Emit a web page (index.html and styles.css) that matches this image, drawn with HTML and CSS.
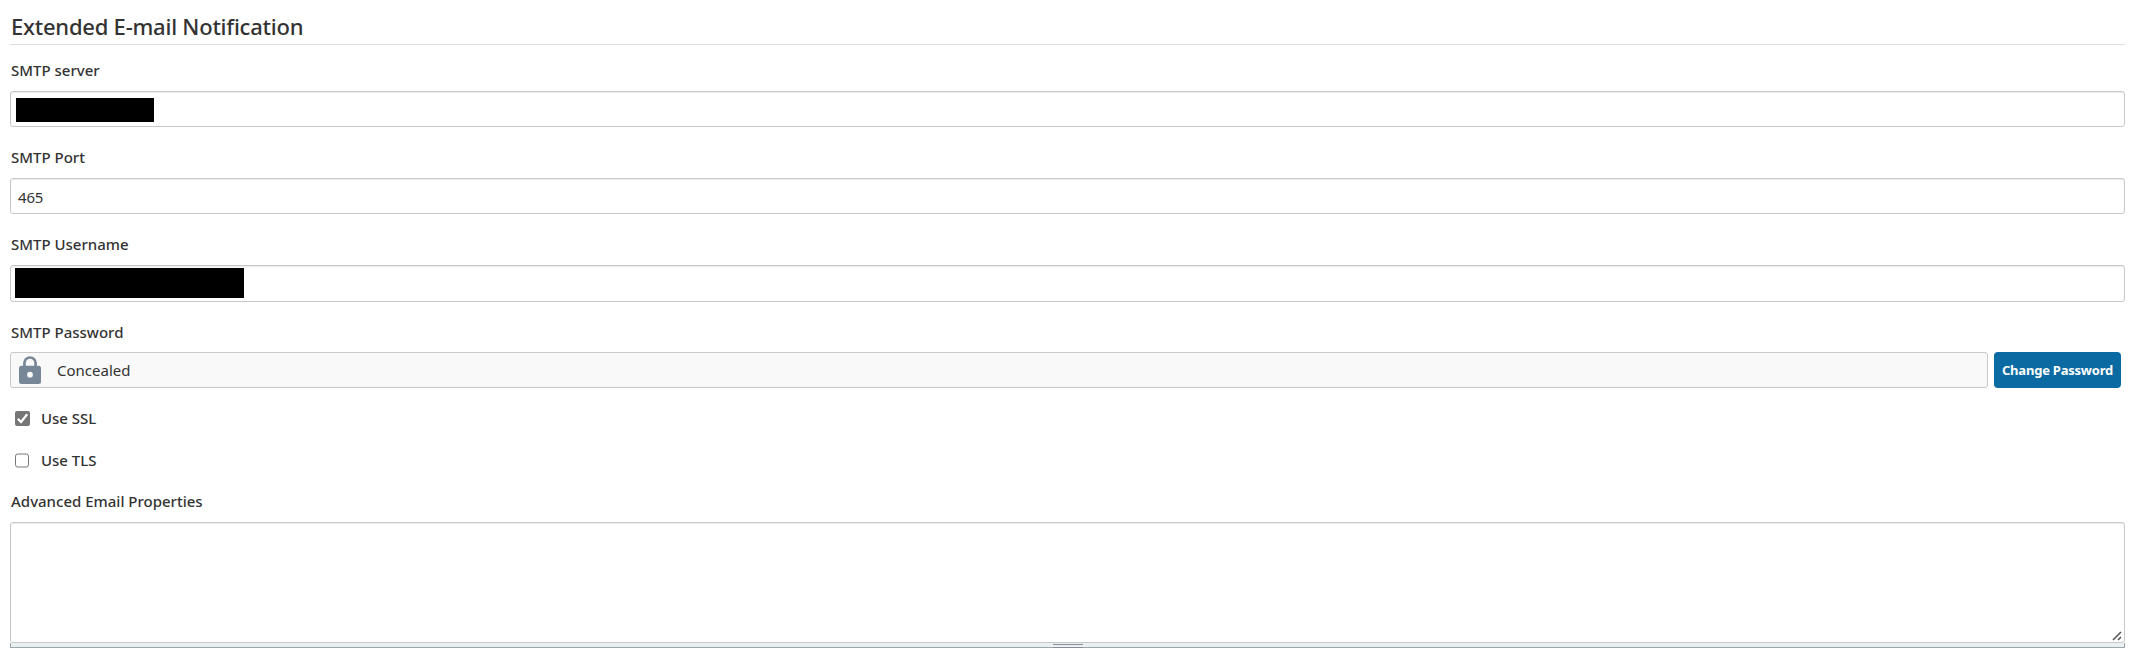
FILE: index.html
```
<!DOCTYPE html>
<html lang="en">
<head>
<meta charset="utf-8">
<title>Extended E-mail Notification</title>
<link rel="stylesheet" href="styles.css">
</head>
<body>
<form class="section">
  <h1 class="section-title"><span>Extended E-mail Notification</span></h1>
  <div class="field">
    <div class="label server">SMTP server</div>
    <div class="input"><span class="redacted host"></span></div>
  </div>
  <div class="field">
    <div class="label port">SMTP Port</div>
    <div class="input"><span class="value">465</span></div>
  </div>
  <div class="field">
    <div class="label username">SMTP Username</div>
    <div class="input tall"><span class="redacted user"></span></div>
  </div>
  <div class="field">
    <div class="label password">SMTP Password</div>
    <div class="password-row">
      <div class="input concealed">
        <svg class="lock" viewBox="0 0 22 28" width="22" height="28"><path d="M5.4 11V7.1a5.6 5.6 0 0 1 11.2 0V11" fill="none" stroke="#788797" stroke-width="2.7"/><rect y="9.7" width="22" height="18.3" rx="2.5" fill="#788797"/><circle cx="11" cy="18.7" r="2.9" fill="#f9f9f9"/></svg>
        <span class="concealed-text">Concealed</span>
      </div>
      <button class="change" type="button"><span>Change Password</span></button>
    </div>
  </div>
  <div class="check ssl">
    <svg width="15" height="15" viewBox="0 0 15 15"><rect width="15" height="15" rx="2" fill="#767676"/><path d="M2.8 7.8L6 11l6.2-7.7" fill="none" stroke="#fff" stroke-width="2.2"/></svg>
    <span class="check-label">Use SSL</span>
  </div>
  <div class="check tls">
    <svg width="15" height="15" viewBox="0 0 15 15"><rect x=".5" y="1" width="13" height="13" rx="2.2" fill="#fff" stroke="#767676"/></svg>
    <span class="check-label">Use TLS</span>
  </div>
  <div class="label advanced">Advanced Email Properties</div>
  <div class="textarea">
    <svg width="10" height="10" viewBox="0 0 10 10"><path d="M1 9L9 1M6 9l3-3" fill="none" stroke="#555" stroke-width="1.6"/></svg>
  </div>
  <div class="resize-bar"><i class="grip"></i></div>
</form>
</body>
</html>
```
FILE: styles.css
```
* { box-sizing: border-box; }
body {
  margin: 0;
  background: #fff;
  color: #333;
  font-family: "Noto Sans", "Open Sans", sans-serif;
  font-size: 15px;
  line-height: 20px;
}
.section { display: flex; flex-direction: column; padding: 0 13px 0 10px; }
.section-title {
  height: 45px;
  margin: 0 0 15px;
  padding: 11px 0 0 1px;
  border-bottom: 1px solid #ddd;
  font-size: 22px;
  line-height: 30px;
  font-weight: 500;
  letter-spacing: -.23px;
}
.field { margin-bottom: 20px; }
.label {
  height: 20px;
  margin-bottom: 11px;
  padding-left: 1px;
  font-weight: 500;
  white-space: nowrap;
}
.label.password { margin-bottom: 10px; }
.input {
  display: flex;
  align-items: center;
  height: 36px;
  border: 1px solid #c8c8c8;
  border-radius: 3px;
  background: #fff;
  box-shadow: inset 0 1px 1px rgba(0, 0, 0, .08);
}
.input.tall { height: 37px; align-items: flex-start; }
.value { padding: 1px 0 0 7px; letter-spacing: -.2px; }
.redacted { background: #000; }
.host { width: 138px; height: 24px; margin: 2px 0 0 5px; }
.user { width: 229px; height: 30px; margin: 2px 0 0 4px; }
.password-row { display: flex; gap: 6px; padding-right: 4px; }
.concealed { flex: 1; background: #f9f9f9; box-shadow: none; }
.lock { margin-left: 8px; }
.concealed-text { margin-left: 16px; }
.change {
  width: 127px;
  height: 36px;
  padding: 0;
  border: 0;
  border-radius: 4px;
  background: #0b6aa2;
  color: #fff;
  font: 700 13px/20px "Noto Sans", "Open Sans", sans-serif;
  letter-spacing: -.22px;
  white-space: nowrap;
}
.check { display: flex; align-items: center; height: 20px; padding-left: 5px; font-weight: 500; }
.check-label { margin-left: 11px; }
.ssl svg { margin-top: 1px; }
.ssl { margin-bottom: 22px; }
.tls { margin-bottom: 21px; }
.textarea {
  display: flex;
  align-items: flex-end;
  justify-content: flex-end;
  height: 121px;
  padding: 0 2px 1px 0;
  border: 1px solid #c8c8c8;
  border-radius: 3px;
  box-shadow: inset 0 1px 1px rgba(0, 0, 0, .08);
}
.resize-bar {
  display: flex;
  justify-content: center;
  height: 5px;
  border: 1px solid #9aa5ac;
  border-top: 0;
  background: #eaeff2;
}
.grip { width: 30px; height: 4px; margin-top: 1px; border: solid #888e93; border-width: 1px 0; }
```
